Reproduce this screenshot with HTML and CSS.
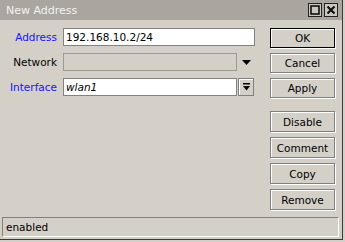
FILE: index.html
```html
<!DOCTYPE html>
<html lang="en">
<head>
    <meta charset="UTF-8">
    <title>New Address</title>
    <link rel="stylesheet" href="styles.css">
</head>
<body>
    <div class="window">
        <div class="titlebar">
            <span class="title">New Address</span>
            <div class="win-controls">
                <span class="win-btn">
                    <svg width="12" height="12" viewBox="0 0 12 12"><rect x="2" y="2" width="8" height="8" fill="none" stroke="#111" stroke-width="1.6"/></svg>
                </span>
                <span class="win-btn">
                    <svg width="12" height="12" viewBox="0 0 12 12"><path d="M2.5 2.5 L9.5 9.5 M9.5 2.5 L2.5 9.5" stroke="#111" stroke-width="2.2"/></svg>
                </span>
            </div>
        </div>

        <div class="content">
            <div class="form">
                <div class="row">
                    <span class="label link">Address</span>
                    <div class="field field-wide">192.168.10.2/24</div>
                </div>
                <div class="row">
                    <span class="label">Network</span>
                    <div class="field field-disabled"></div>
                    <span class="arrow">
                        <svg width="9" height="5" viewBox="0 0 9 5"><path d="M0 0 H9 L4.5 5 Z" fill="#000"/></svg>
                    </span>
                </div>
                <div class="row">
                    <span class="label link">Interface</span>
                    <div class="field field-italic">wlan1</div>
                    <span class="drop-btn">
                        <svg width="7" height="8" viewBox="0 0 7 8"><rect x="0" y="0" width="7" height="1.5" fill="#000"/><path d="M0 3 H7 L3.5 7.5 Z" fill="#000"/></svg>
                    </span>
                </div>
            </div>

            <div class="buttons">
                <div class="btn-group">
                    <div class="btn btn-default">OK</div>
                    <div class="btn">Cancel</div>
                    <div class="btn">Apply</div>
                </div>
                <div class="btn-group btn-group-lower">
                    <div class="btn">Disable</div>
                    <div class="btn">Comment</div>
                    <div class="btn">Copy</div>
                    <div class="btn">Remove</div>
                </div>
            </div>
        </div>

        <div class="statusbar">enabled</div>
    </div>
</body>
</html>
```

FILE: styles.css
```css
* {
    margin: 0;
    padding: 0;
    box-sizing: border-box;
}

body {
    font-family: 'DejaVu Sans', 'Liberation Sans', sans-serif;
    font-size: 10.5px;
    background: #d4d0c8;
    color: #000;
}

.window {
    width: 343px;
    height: 240px;
    display: flex;
    flex-direction: column;
    background: #d4d0c8;
    border-right: 1px solid #3a3a3a;
    border-bottom: 1px solid #3a3a3a;
}

.titlebar {
    height: 20px;
    background: #aaa69f;
    display: flex;
    justify-content: space-between;
    align-items: center;
    padding: 0 4px 0 6px;
}

.title {
    color: #f2f2f2;
    font-size: 11px;
}

.win-controls {
    display: flex;
    gap: 2px;
}

.win-btn {
    width: 14px;
    height: 14px;
    border: 1px solid #222;
    background: #ccc8c0;
    display: flex;
    align-items: center;
    justify-content: center;
}

.content {
    flex: 1;
    display: flex;
    padding-top: 8px;
}

.form {
    width: 255px;
    display: flex;
    flex-direction: column;
    gap: 7px;
}

.row {
    display: flex;
    align-items: center;
    height: 18px;
}

.label {
    width: 57px;
    text-align: right;
    margin-right: 6px;
}

.label.link {
    color: #1414ff;
}

.field {
    width: 174px;
    height: 18px;
    background: #fff;
    border: 1px solid #828282;
    padding: 0 2px;
    line-height: 16px;
}

.field-wide {
    width: 192px;
}

.field-disabled {
    background: #d4d0c8;
    border-color: #9a9a9a;
}

.field-italic {
    font-style: italic;
}

.arrow {
    width: 18px;
    display: flex;
    justify-content: center;
    padding-left: 1px;
}

.drop-btn {
    width: 16px;
    height: 18px;
    margin-left: 1px;
    border: 1px solid #808080;
    box-shadow: inset 1px 1px #fff;
    display: flex;
    align-items: center;
    justify-content: center;
}

.buttons {
    margin-left: 15px;
    width: 65px;
    display: flex;
    flex-direction: column;
}

.btn-group {
    display: flex;
    flex-direction: column;
    gap: 5px;
}

.btn-group-lower {
    margin-top: 13px;
    gap: 5px;
}

.btn-group-lower .btn {
    height: 21px;
}

.btn {
    height: 20px;
    border: 1px solid #808080;
    box-shadow: inset 1px 1px #fff, 1px 1px #fff;
    display: flex;
    align-items: center;
    justify-content: center;
}

.btn-default {
    border-color: #000;
}

.statusbar {
    height: 20px;
    margin: 0 3px 2px 2px;
    border: 1px solid #808080;
    border-right-color: #fff;
    border-bottom-color: #fff;
    padding-left: 3px;
    line-height: 18px;
}
```
